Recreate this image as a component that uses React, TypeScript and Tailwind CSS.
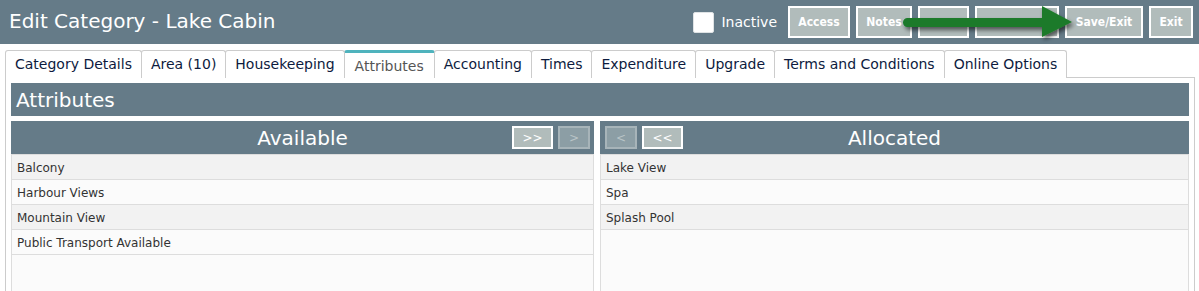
import React from "react";

const tabs = [
  "Category Details",
  "Area (10)",
  "Housekeeping",
  "Attributes",
  "Accounting",
  "Times",
  "Expenditure",
  "Upgrade",
  "Terms and Conditions",
  "Online Options",
];

function HeadBtn({ w, label }: { w: string; label?: string }) {
  return (
    <div
      className={`${w} h-[32px] border-2 border-white bg-[#b1bcbb] text-white text-[12px] font-bold font-['DejaVu_Sans_Condensed','DejaVu_Sans',sans-serif] [font-stretch:condensed] flex items-center justify-center`}
    >
      {label}
    </div>
  );
}

function SmallBtn({ label, disabled, w }: { label: string; disabled?: boolean; w: string }) {
  return (
    <div
      className={
        disabled
          ? `${w} h-[23px] border-2 border-[#a7b4b9] bg-[#8c9ea5] text-[#b9c4c7] text-[12px] flex items-center justify-center`
          : `${w} h-[23px] border-2 border-white bg-[#b1bcbb] text-white text-[12px] flex items-center justify-center`
      }
    >
      {label}
    </div>
  );
}

function ListCol({
  title,
  items,
  side,
}: {
  title: string;
  items: string[];
  side: "left" | "right";
}) {
  return (
    <div className="flex flex-col">
      <div className="h-[33px] bg-[#657b88] grid grid-cols-[1fr_auto_1fr] items-center">
        <div className="flex gap-[5px] pl-[5px]">
          {side === "right" && (
            <>
              <SmallBtn label="<" disabled w="w-[32px]" />
              <SmallBtn label="<<" w="w-[41px]" />
            </>
          )}
        </div>
        <div className="text-white text-[20px] leading-none">{title}</div>
        <div className="flex gap-[5px] pr-[4px] justify-end">
          {side === "left" && (
            <>
              <SmallBtn label=">>" w="w-[41px]" />
              <SmallBtn label=">" disabled w="w-[32px]" />
            </>
          )}
        </div>
      </div>
      <div className="border-x border-t border-[#dddddd] bg-[#fbfbfb] h-[160px]">
        {items.map((it, i) => (
          <div
            key={it}
            className={`h-[25px] border-b border-[#dddddd] flex items-center pl-[5px] pt-[1px] text-[12px] text-[#333333] ${
              i % 2 === 0 ? "bg-[#f2f2f2]" : "bg-[#fbfbfb]"
            }`}
          >
            {it}
          </div>
        ))}
      </div>
    </div>
  );
}

export default function App() {
  return (
    <div className="relative w-[1199px] h-[291px] overflow-hidden bg-white font-['DejaVu_Sans',sans-serif]">
      {/* Header */}
      <div className="h-[44px] bg-[#657b88] flex items-center justify-between pl-[9px] pr-[6px]">
        <div className="text-white text-[20px] leading-none pb-[2px]">Edit Category - Lake Cabin</div>
        <div className="flex items-center">
          <div className="w-[21px] h-[21px] bg-white rounded-[2px] border border-[#dfe3e5]" />
          <div className="ml-[7px] mr-[11px] text-white text-[14px]">Inactive</div>
          <div className="flex gap-[6px]">
            <HeadBtn w="w-[62px]" label="Access" />
            <HeadBtn w="w-[56px]" label="Notes" />
            <HeadBtn w="w-[51px]" />
            <HeadBtn w="w-[84px]" />
            <HeadBtn w="w-[78px]" label="Save/Exit" />
            <HeadBtn w="w-[44px]" label="Exit" />
          </div>
        </div>
      </div>

      {/* Tabs + panel */}
      <div className="pl-[5px] pr-[4px] pt-[6px]">
        <div className="flex relative z-10 -mb-px">
          {tabs.map((t, i) => {
            const active = t === "Attributes";
            return (
              <div
                key={t}
                className={`h-[28px] px-[9px] bg-white border-x border-[#cccccc] rounded-t-[3px] flex items-center text-[14px] whitespace-nowrap ${
                  i > 0 ? "-ml-px" : ""
                } ${
                  active
                    ? "border-t-[3px] border-t-[#4fb3bd] text-[#555555] pt-[2px] px-[10px]"
                    : "border-t text-[#0d1b3e] px-[9px]"
                }`}
              >
                {t}
              </div>
            );
          })}
        </div>
        <div className="border-x border-t border-[#cccccc] pt-[5px] px-[5px] h-[220px]">
          <div className="h-[33px] bg-[#657b88] flex items-center pl-[5px] text-white text-[20px]">
            Attributes
          </div>
          <div className="mt-[5px] grid grid-cols-[583px_1fr] gap-[6px]">
            <ListCol
              title="Available"
              side="left"
              items={["Balcony", "Harbour Views", "Mountain View", "Public Transport Available"]}
            />
            <ListCol title="Allocated" side="right" items={["Lake View", "Spa", "Splash Pool"]} />
          </div>
        </div>
      </div>

      {/* Green annotation arrow */}
      <svg
        className="absolute left-[895px] top-0"
        width="190"
        height="44"
        viewBox="0 0 190 44"
      >
        <defs>
          <filter id="sh" x="-10%" y="-30%" width="130%" height="180%">
            <feDropShadow dx="2" dy="3" stdDeviation="2" floodColor="#000" floodOpacity="0.55" />
          </filter>
        </defs>
        <g filter="url(#sh)">
          <path
            d="M12.5 18 L147 18 L147 6 L177 22 L147 37 L147 27 L12.5 27 A4.5 4.5 0 0 1 12.5 18 Z"
            fill="#1b7a2a"
          />
        </g>
      </svg>
    </div>
  );
}
